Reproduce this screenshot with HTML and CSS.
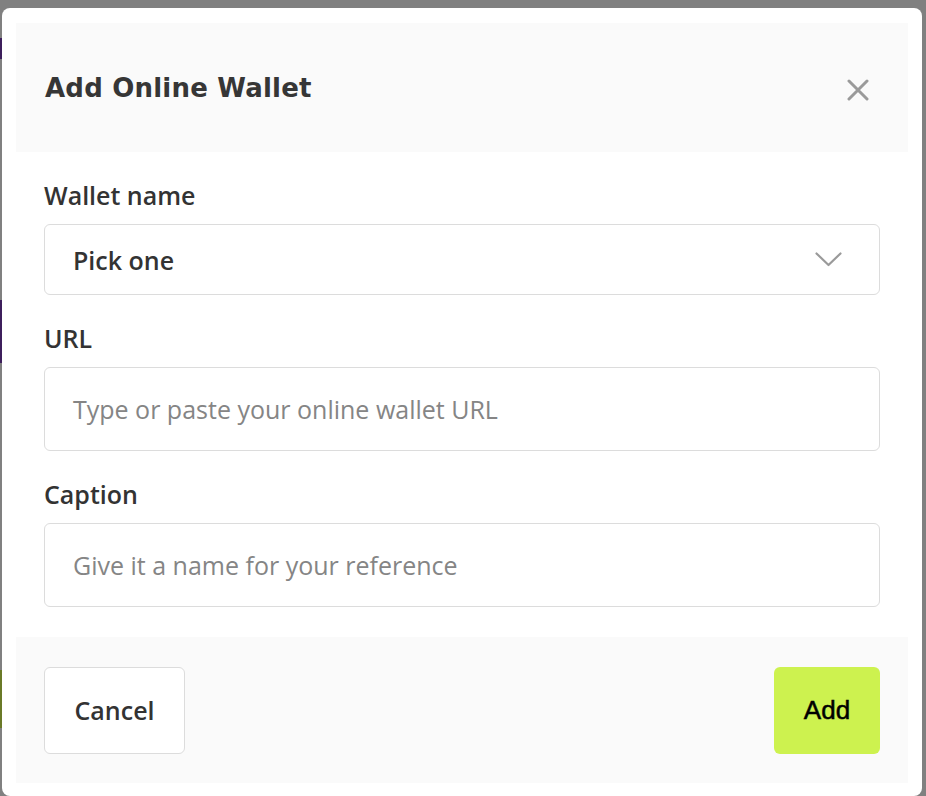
FILE: index.html
```html
<!DOCTYPE html>
<html lang="en">
<head>
<meta charset="utf-8">
<title>Add Online Wallet</title>
<link rel="stylesheet" href="styles.css">
</head>
<body>
<div class="backdrop">
  <span class="peek peek-purple-a"></span>
  <span class="peek peek-purple-b"></span>
  <span class="peek peek-green"></span>
</div>
<div class="modal">
  <div class="modal-header">
    <h1 class="modal-title">Add Online Wallet</h1>
    <button class="close-btn" aria-label="Close">
      <svg width="22" height="22" viewBox="0 0 22 22"><path d="M2 2 L20 20 M20 2 L2 20" stroke="#9a9a9a" stroke-width="3" stroke-linecap="round" fill="none"/></svg>
    </button>
  </div>
  <div class="modal-body">
    <div class="field">
      <label class="label">Wallet name</label>
      <div class="select">
        <span class="select-value">Pick one</span>
        <svg class="chevron" width="27" height="15" viewBox="0 0 27 15"><path d="M1.5 1.5 L13.5 13 L25.5 1.5" stroke="#9a9a9a" stroke-width="2.2" fill="none" stroke-linecap="round" stroke-linejoin="round"/></svg>
      </div>
    </div>
    <div class="field">
      <label class="label">URL</label>
      <div class="input">Type or paste your online wallet URL</div>
    </div>
    <div class="field">
      <label class="label">Caption</label>
      <div class="input">Give it a name for your reference</div>
    </div>
  </div>
  <div class="modal-footer">
    <button class="btn btn-cancel">Cancel</button>
    <button class="btn btn-add">Add</button>
  </div>
</div>
</body>
</html>
```
FILE: styles.css
```css
* { box-sizing: border-box; }
html, body { margin: 0; padding: 0; }
body {
  background: #808080;
  font-family: "Open Sans", "Noto Sans", sans-serif;
  color: #333;
  height: 796px;
  overflow: hidden;
  padding: 8px 4px 0 2px;
  position: relative;
}
.backdrop { position: absolute; left: 0; top: 0; width: 2px; height: 796px; }
.peek { position: absolute; left: 0; width: 2px; }
.peek-purple-a { top: 38px; height: 21px; background: #3d1f5c; }
.peek-purple-b { top: 300px; height: 63px; background: #3d1f5c; }
.peek-green { top: 670px; height: 58px; background: #6a7a28; }

.modal {
  position: relative;
  width: 920px;
  height: 788px;
  background: #fff;
  border-radius: 8px;
  padding: 15px 14px 13px 14px;
  display: flex;
  flex-direction: column;
}
.modal-header {
  background: #fafafa;
  height: 129px;
  flex: none;
  display: flex;
  align-items: center;
  justify-content: space-between;
  padding: 0 39px 0 29px;
}
.modal-title {
  margin: 0;
  font-family: "DejaVu Sans", "Noto Sans", sans-serif;
  font-weight: 700;
  font-size: 26px;
  letter-spacing: 0.2px;
  color: #363636;
}
.close-btn {
  border: 0;
  background: none;
  padding: 0;
  width: 22px;
  height: 22px;
  display: flex;
  cursor: pointer;
  margin-top: 5px;
}
.modal-body {
  padding: 27px 28px 30px 28px;
  display: flex;
  flex-direction: column;
  gap: 27px;
}
.field { display: flex; flex-direction: column; }
.label {
  font-size: 25px;
  line-height: 32px;
  font-weight: 600;
  color: #333;
  margin-bottom: 13px;
}
.select {
  height: 71px;
  border: 1px solid #dcdcdc;
  border-radius: 6px;
  display: flex;
  align-items: center;
  justify-content: space-between;
  padding: 0 37px 0 28px;
}
.select-value { font-size: 25px; font-weight: 600; color: #333; }
.input {
  height: 84px;
  border: 1px solid #dcdcdc;
  border-radius: 6px;
  display: flex;
  align-items: center;
  padding: 0 28px;
  font-size: 25px;
  color: #858585;
}
.modal-footer {
  background: #fafafa;
  height: 146px;
  flex: none;
  display: flex;
  align-items: center;
  justify-content: space-between;
  padding: 0 28px;
}
.btn {
  height: 87px;
  border-radius: 6px;
  cursor: pointer;
}
.btn-cancel {
  width: 141px;
  background: #fff;
  border: 1px solid #dcdcdc;
  font-family: "Open Sans", sans-serif;
  font-size: 25px;
  font-weight: 600;
  color: #333;
}
.btn-add {
  width: 106px;
  background: #cdf24f;
  border: 0;
  font-family: "Liberation Sans", Arial, sans-serif;
  font-size: 26px;
  color: #000;
  -webkit-text-stroke: 0.5px #000;
}
```
